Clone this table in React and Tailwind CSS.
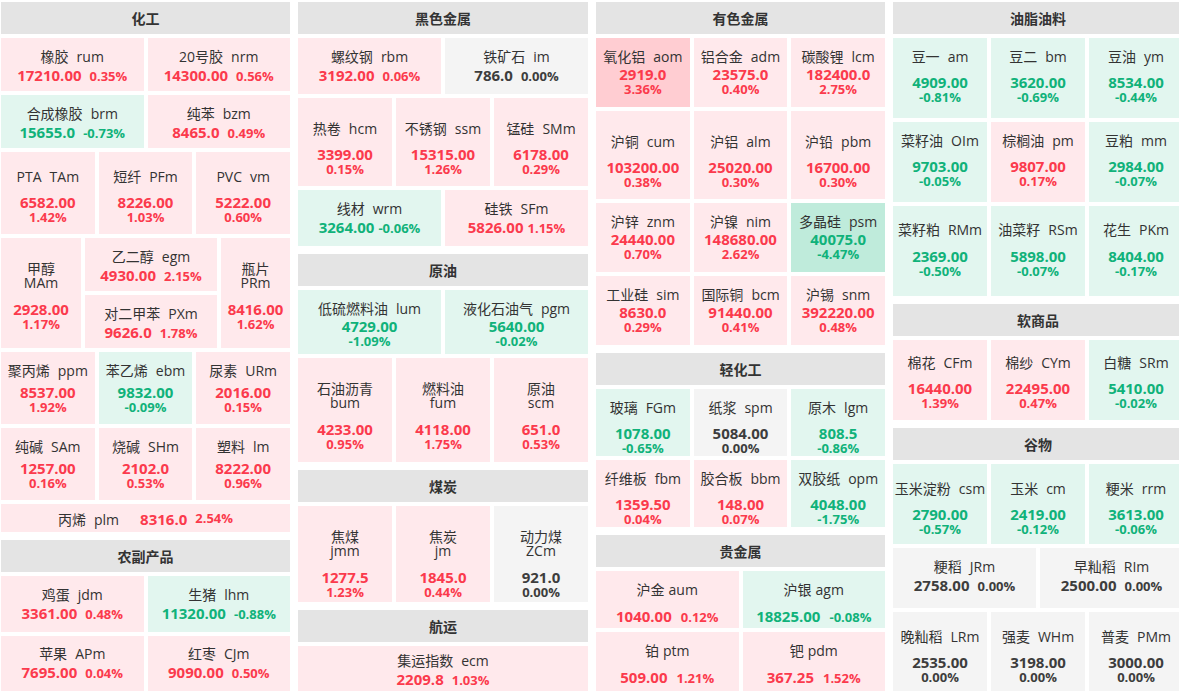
import React from "react";

const BG = {
  r: "bg-[#ffe9ec]",
  g: "bg-[#e2f6ef]",
  z: "bg-[#f4f4f4]",
  R: "bg-[#ffcdd2]",
  G: "bg-[#bfebdb]",
};
const TC = {
  r: "text-[#fb3a4c]",
  R: "text-[#fb3a4c]",
  g: "text-[#10b27a]",
  G: "text-[#10b27a]",
  z: "text-[#3d3d3d]",
};

const mk = (a) => ({ cn: a[0], code: a[1], num: a[2], pct: a[3], c: a[4], wrap: a[5] });

function Cell({ d, type, pt, mt, vgap, ngap }) {
  const tc = TC[d.c];
  return (
    <div className={`${BG[d.c]} ${pt} text-center overflow-hidden`}>
      {type === "inline" ? (
        <>
          <div className="text-[14px] leading-[18px] text-[#333] whitespace-nowrap">
            {d.cn}
            <span className={ngap}>{d.code}</span>
          </div>
          <div className={`${mt} leading-[18px] font-bold whitespace-nowrap ${tc}`}>
            <span className="text-[15px]">{d.num}</span>
            <span className={`${vgap} text-[13px]`}>{d.pct}</span>
          </div>
        </>
      ) : (
        <>
          {d.wrap ? (
            <div className="text-[14px] leading-[14px] text-[#333] whitespace-nowrap">
              <div>{d.cn}</div>
              <div>{d.code}</div>
            </div>
          ) : (
            <div className="text-[14px] leading-[18px] text-[#333] whitespace-nowrap">
              {d.cn}
              <span className={ngap}>{d.code}</span>
            </div>
          )}
          <div className={`${mt} text-[15px] leading-[15px] font-bold whitespace-nowrap ${tc}`}>{d.num}</div>
          <div className={`text-[13px] leading-[14px] font-bold whitespace-nowrap ${tc}`}>{d.pct}</div>
        </>
      )}
    </div>
  );
}

function Row({ h, cols, type, pt, mt = "", vgap = "ml-[8px]", ngap = "ml-[8px]", items }) {
  return (
    <div className={`grid ${cols} gap-[4px] ${h} shrink-0`}>
      {items.map((a, i) => (
        <Cell key={i} d={mk(a)} type={type} pt={pt} mt={mt} vgap={vgap} ngap={ngap} />
      ))}
    </div>
  );
}

function Header({ title }) {
  return (
    <div className="h-[32px] shrink-0 flex items-center justify-center bg-[#e4e4e4] text-[14px] font-bold text-[#333]">
      {title}
    </div>
  );
}

function Section({ title, children }) {
  return (
    <div className="flex flex-col gap-[4px]">
      <Header title={title} />
      {children}
    </div>
  );
}

function Col({ children }) {
  return <div className="flex flex-col gap-[8px] pt-[2px] min-w-0">{children}</div>;
}

export default function App() {
  return (
    <div className="w-[1179px] h-[691px] overflow-hidden bg-white font-['Open_Sans','Noto_Sans_CJK_SC',sans-serif]">
      <div className="grid grid-cols-[289px_290px_289px_290px] gap-x-[8px] pl-[1px] items-start">
        {/* Column 1 */}
        <Col>
          <Section title="化工">
            <Row h="h-[53px]" cols="grid-cols-2" type="inline" pt="pt-[10px]"
              items={[["橡胶", "rum", "17210.00", "0.35%", "r"], ["20号胶", "nrm", "14300.00", "0.56%", "r"]]} />
            <Row h="h-[53px]" cols="grid-cols-2" type="inline" pt="pt-[10px]"
              items={[["合成橡胶", "brm", "15655.0", "-0.73%", "g"], ["纯苯", "bzm", "8465.0", "0.49%", "r"]]} />
            <Row h="h-[82px]" cols="grid-cols-3" type="stack" pt="pt-[16px]" mt="mt-[9px]"
              items={[["PTA", "TAm", "6582.00", "1.42%", "r"], ["短纤", "PFm", "8226.00", "1.03%", "r"], ["PVC", "vm", "5222.00", "0.60%", "r"]]} />
            <div className="grid grid-cols-[80px_1fr_69px] gap-[4px] h-[110px] shrink-0">
              <Cell d={mk(["甲醇", "MAm", "2928.00", "1.17%", "r", true])} type="stack" pt="pt-[24px]" mt="mt-[12px]" />
              <div className="grid grid-rows-2 gap-[4px]">
                <Cell d={mk(["乙二醇", "egm", "4930.00", "2.15%", "r"])} type="inline" pt="pt-[10px]" mt="" vgap="ml-[8px]" ngap="ml-[8px]" />
                <Cell d={mk(["对二甲苯", "PXm", "9626.0", "1.78%", "r"])} type="inline" pt="pt-[10px]" mt="" vgap="ml-[8px]" ngap="ml-[8px]" />
              </div>
              <Cell d={mk(["瓶片", "PRm", "8416.00", "1.62%", "r", true])} type="stack" pt="pt-[24px]" mt="mt-[12px]" />
            </div>
            <Row h="h-[72px]" cols="grid-cols-3" type="stack" pt="pt-[10px]" mt="mt-[5px]"
              items={[["聚丙烯", "ppm", "8537.00", "1.92%", "r"], ["苯乙烯", "ebm", "9832.00", "-0.09%", "g"], ["尿素", "URm", "2016.00", "0.15%", "r"]]} />
            <Row h="h-[72px]" cols="grid-cols-3" type="stack" pt="pt-[10px]" mt="mt-[5px]"
              items={[["纯碱", "SAm", "1257.00", "0.16%", "r"], ["烧碱", "SHm", "2102.0", "0.53%", "r"], ["塑料", "lm", "8222.00", "0.96%", "r"]]} />
            <div className="h-[28px] shrink-0 pt-[2px] bg-[#ffe9ec] flex items-center justify-center whitespace-nowrap">
              <span className="text-[14px] text-[#333]">
                丙烯<span className="ml-[8px]">plm</span>
              </span>
              <span className="ml-[21px] text-[15px] font-bold text-[#fb3a4c]">8316.0</span>
              <span className="ml-[8px] text-[13px] font-bold text-[#fb3a4c]">2.54%</span>
            </div>
          </Section>
          <Section title="农副产品">
            <Row h="h-[56px]" cols="grid-cols-2" type="inline" pt="pt-[10px]"
              items={[["鸡蛋", "jdm", "3361.00", "0.48%", "r"], ["生猪", "lhm", "11320.00", "-0.88%", "g"]]} />
            <Row h="h-[56px]" cols="grid-cols-2" type="inline" pt="pt-[9px]"
              items={[["苹果", "APm", "7695.00", "0.04%", "r"], ["红枣", "CJm", "9090.00", "0.50%", "r"]]} />
          </Section>
        </Col>

        {/* Column 2 */}
        <Col>
          <Section title="黑色金属">
            <Row h="h-[56px]" cols="grid-cols-2" type="inline" pt="pt-[10px]"
              items={[["螺纹钢", "rbm", "3192.00", "0.06%", "r"], ["铁矿石", "im", "786.0", "0.00%", "z"]]} />
            <Row h="h-[88px]" cols="grid-cols-3" type="stack" pt="pt-[22px]" mt="mt-[9px]"
              items={[["热卷", "hcm", "3399.00", "0.15%", "r"], ["不锈钢", "ssm", "15315.00", "1.26%", "r"], ["锰硅", "SMm", "6178.00", "0.29%", "r"]]} />
            <Row h="h-[56px]" cols="grid-cols-2" type="inline" pt="pt-[10px]" vgap="ml-[4px]"
              items={[["线材", "wrm", "3264.00", "-0.06%", "g"], ["硅铁", "SFm", "5826.00", "1.15%", "r"]]} />
          </Section>
          <Section title="原油">
            <Row h="h-[64px]" cols="grid-cols-2" type="stack" pt="pt-[10px]" mt="mt-[1px]"
              items={[["低硫燃料油", "lum", "4729.00", "-1.09%", "g"], ["液化石油气", "pgm", "5640.00", "-0.02%", "g"]]} />
            <Row h="h-[104px]" cols="grid-cols-3" type="stack" pt="pt-[24px]" mt="mt-[12px]"
              items={[["石油沥青", "bum", "4233.00", "0.95%", "r", true], ["燃料油", "fum", "4118.00", "1.75%", "r", true], ["原油", "scm", "651.0", "0.53%", "r", true]]} />
          </Section>
          <Section title="煤炭">
            <Row h="h-[96px]" cols="grid-cols-3" type="stack" pt="pt-[24px]" mt="mt-[12px]"
              items={[["焦煤", "jmm", "1277.5", "1.23%", "r", true], ["焦炭", "jm", "1845.0", "0.44%", "r", true], ["动力煤", "ZCm", "921.0", "0.00%", "z", true]]} />
          </Section>
          <Section title="航运">
            <Row h="h-[48px]" cols="grid-cols-1" type="inline" pt="pt-[6px]"
              items={[["集运指数", "ecm", "2209.8", "1.03%", "r"]]} />
          </Section>
        </Col>

        {/* Column 3 */}
        <Col>
          <Section title="有色金属">
            <Row h="h-[69px]" cols="grid-cols-3" type="stack" pt="pt-[10px]" mt="mt-[1px]"
              items={[["氧化铝", "aom", "2919.0", "3.36%", "R"], ["铝合金", "adm", "23575.0", "0.40%", "r"], ["碳酸锂", "lcm", "182400.0", "2.75%", "r"]]} />
            <Row h="h-[88px]" cols="grid-cols-3" type="stack" pt="pt-[22px]" mt="mt-[9px]"
              items={[["沪铜", "cum", "103200.00", "0.38%", "r"], ["沪铝", "alm", "25020.00", "0.30%", "r"], ["沪铅", "pbm", "16700.00", "0.30%", "r"]]} />
            <Row h="h-[69px]" cols="grid-cols-3" type="stack" pt="pt-[10px]" mt="mt-[1px]"
              items={[["沪锌", "znm", "24440.00", "0.70%", "r"], ["沪镍", "nim", "148680.00", "2.62%", "r"], ["多晶硅", "psm", "40075.0", "-4.47%", "G"]]} />
            <Row h="h-[69px]" cols="grid-cols-3" type="stack" pt="pt-[10px]" mt="mt-[1px]"
              items={[["工业硅", "sim", "8630.0", "0.29%", "r"], ["国际铜", "bcm", "91440.00", "0.41%", "r"], ["沪锡", "snm", "392220.00", "0.48%", "r"]]} />
          </Section>
          <Section title="轻化工">
            <Row h="h-[67px]" cols="grid-cols-3" type="stack" pt="pt-[10px]" mt="mt-[9px]"
              items={[["玻璃", "FGm", "1078.00", "-0.65%", "g"], ["纸浆", "spm", "5084.00", "0.00%", "z"], ["原木", "lgm", "808.5", "-0.86%", "g"]]} />
            <Row h="h-[67px]" cols="grid-cols-3" type="stack" pt="pt-[10px]" mt="mt-[9px]"
              items={[["纤维板", "fbm", "1359.50", "0.04%", "r"], ["胶合板", "bbm", "148.00", "0.07%", "r"], ["双胶纸", "opm", "4048.00", "-1.75%", "g"]]} />
          </Section>
          <Section title="贵金属">
            <Row h="h-[57px]" cols="grid-cols-2" type="inline" pt="pt-[10px]" mt="mt-[8px]" ngap="ml-[4px]" vgap="ml-[9px]"
              items={[["沪金", "aum", "1040.00", "0.12%", "r"], ["沪银", "agm", "18825.00", "-0.08%", "g"]]} />
            <Row h="h-[59px]" cols="grid-cols-2" type="inline" pt="pt-[10px]" mt="mt-[8px]" ngap="ml-[4px]" vgap="ml-[9px]"
              items={[["铂", "ptm", "509.00", "1.21%", "r"], ["钯", "pdm", "367.25", "1.52%", "r"]]} />
          </Section>
        </Col>

        {/* Column 4 */}
        <Col>
          <Section title="油脂油料">
            <Row h="h-[80px]" cols="grid-cols-3" type="stack" pt="pt-[10px]" mt="mt-[9px]"
              items={[["豆一", "am", "4909.00", "-0.81%", "g"], ["豆二", "bm", "3620.00", "-0.69%", "g"], ["豆油", "ym", "8534.00", "-0.44%", "g"]]} />
            <Row h="h-[80px]" cols="grid-cols-3" type="stack" pt="pt-[10px]" mt="mt-[9px]"
              items={[["菜籽油", "OIm", "9703.00", "-0.05%", "g"], ["棕榈油", "pm", "9807.00", "0.17%", "r"], ["豆粕", "mm", "2984.00", "-0.07%", "g"]]} />
            <Row h="h-[90px]" cols="grid-cols-3" type="stack" pt="pt-[15px]" mt="mt-[10px]"
              items={[["菜籽粕", "RMm", "2369.00", "-0.50%", "g"], ["油菜籽", "RSm", "5898.00", "-0.07%", "g"], ["花生", "PKm", "8404.00", "-0.17%", "g"]]} />
          </Section>
          <Section title="软商品">
            <Row h="h-[80px]" cols="grid-cols-3" type="stack" pt="pt-[14px]" mt="mt-[9px]"
              items={[["棉花", "CFm", "16440.00", "1.39%", "r"], ["棉纱", "CYm", "22495.00", "0.47%", "r"], ["白糖", "SRm", "5410.00", "-0.02%", "g"]]} />
          </Section>
          <Section title="谷物">
            <Row h="h-[80px]" cols="grid-cols-3" type="stack" pt="pt-[16px]" mt="mt-[9px]"
              items={[["玉米淀粉", "csm", "2790.00", "-0.57%", "g"], ["玉米", "cm", "2419.00", "-0.12%", "g"], ["粳米", "rrm", "3613.00", "-0.06%", "g"]]} />
            <Row h="h-[60px]" cols="grid-cols-2" type="inline" pt="pt-[10px]"
              items={[["粳稻", "JRm", "2758.00", "0.00%", "z"], ["早籼稻", "RIm", "2500.00", "0.00%", "z"]]} />
            <Row h="h-[80px]" cols="grid-cols-3" type="stack" pt="pt-[16px]" mt="mt-[9px]"
              items={[["晚籼稻", "LRm", "2535.00", "0.00%", "z"], ["强麦", "WHm", "3198.00", "0.00%", "z"], ["普麦", "PMm", "3000.00", "0.00%", "z"]]} />
          </Section>
        </Col>
      </div>
    </div>
  );
}
